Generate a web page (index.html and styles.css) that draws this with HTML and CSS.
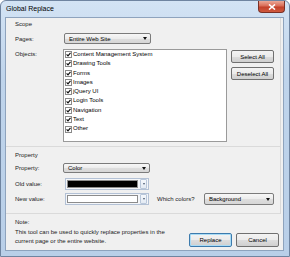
FILE: index.html
```html
<!DOCTYPE html>
<html lang="en">
<head>
  <meta charset="UTF-8">
  <title>Global Replace</title>
  <link rel="stylesheet" href="styles.css">
</head>
<body>
  <div class="window">
    <div class="titlebar">
      <span class="title">Global Replace</span>
      <span class="close">
        <svg width="8" height="6" viewBox="0 0 8 6"><path d="M1 0.5 L7 5.5 M7 0.5 L1 5.5" stroke="#fff" stroke-width="1.6"/></svg>
      </span>
    </div>

    <div class="client">
      <div class="panel scope">
        <div class="heading">Scope</div>
        <div class="row pages">
          <span class="label">Pages:</span>
          <div class="select sel-pages"><span>Entire Web Site</span><i class="arrow"></i></div>
        </div>
        <div class="row objects">
          <span class="label label-top">Objects:</span>
          <ul class="list">
            <li><i class="check"></i>Content Management System</li>
            <li><i class="check"></i>Drawing Tools</li>
            <li><i class="check"></i>Forms</li>
            <li><i class="check"></i>Images</li>
            <li><i class="check"></i>jQuery UI</li>
            <li><i class="check"></i>Login Tools</li>
            <li><i class="check"></i>Navigation</li>
            <li><i class="check"></i>Text</li>
            <li><i class="check"></i>Other</li>
          </ul>
          <div class="side-buttons">
            <button class="btn">Select All</button>
            <button class="btn">Deselect All</button>
          </div>
        </div>
      </div>

      <div class="panel property">
        <div class="heading">Property</div>
        <div class="row prop-row">
          <span class="label">Property:</span>
          <div class="select sel-prop"><span>Color</span><i class="arrow"></i></div>
        </div>
        <div class="row old-row">
          <span class="label">Old value:</span>
          <div class="colorbox">
            <span class="swatch black"></span>
            <span class="mini"><i class="arrow small"></i></span>
          </div>
        </div>
        <div class="row new-row">
          <span class="label">New value:</span>
          <div class="colorbox">
            <span class="swatch white"></span>
            <span class="mini"><i class="arrow small"></i></span>
          </div>
          <span class="which">Which colors?</span>
          <div class="select sel-which"><span>Background</span><i class="arrow"></i></div>
        </div>
      </div>

      <div class="footer">
        <p class="note">Note:<br>This tool can be used to quickly replace properties in the<br>current page or the entire website.</p>
        <div class="actions">
          <button class="btn big default">Replace</button>
          <button class="btn big">Cancel</button>
        </div>
      </div>
    </div>
  </div>
</body>
</html>
```

FILE: styles.css
```css
body {
  margin: 0;
  background: #fff;
  font-family: "Liberation Sans", Arial, sans-serif;
  font-size: 6px;
  color: #1b1b1b;
}

.window {
  box-sizing: border-box;
  width: 290px;
  height: 257px;
  border: 1px solid #6f84a0;
  border-radius: 6px 6px 0 0;
  background: linear-gradient(#d3e3f4, #bfd4eb 30%, #b9cfe8);
  padding: 0 5px 5px 4px;
  display: flex;
  flex-direction: column;
}

.titlebar {
  height: 16px;
  display: flex;
  align-items: flex-start;
  flex-shrink: 0;
}

.title {
  font-size: 7px;
  line-height: 8px;
  margin-top: 4px;
  padding-left: 1px;
  color: #000;
}

.close {
  margin-left: auto;
  margin-right: -1px;
  box-sizing: border-box;
  width: 27px;
  height: 12px;
  border: 1px solid #7a3026;
  border-top: none;
  border-radius: 0 0 4px 4px;
  background: linear-gradient(#eba897, #d96c56 45%, #c3412a 55%, #cf5a3f);
  display: flex;
  align-items: center;
  justify-content: center;
}

.close svg {
  display: block;
}

.client {
  flex: 1;
  background: #f0f0f0;
  border: 1px solid #8ea3bd;
  display: flex;
  flex-direction: column;
}

.panel {
  margin-right: 2px;
  padding-left: 9px;
  border-right: 1px solid #dadada;
  border-bottom: 1px solid #dadada;
}

.scope {
  height: 128px;
  padding-top: 2px;
  box-sizing: border-box;
  height: 129px;
}

.property {
  box-sizing: border-box;
  height: 67px;
  padding-top: 4px;
}

.heading {
  height: 9px;
  line-height: 9px;
}

.row {
  display: flex;
  align-items: center;
}

.label {
  width: 48px;
  flex-shrink: 0;
}

.label-top {
  align-self: flex-start;
  line-height: 9px;
  padding-top: 1px;
}

.pages {
  margin-top: 4px;
  height: 11px;
}

.objects {
  margin-top: 5px;
  align-items: flex-start;
}

.select {
  box-sizing: border-box;
  display: flex;
  align-items: center;
  border: 1px solid #7b7b7b;
  border-radius: 2px;
  background: linear-gradient(#f7f7f7, #ececec 50%, #dedede 51%, #d6d6d6);
  padding: 0 3px 0 4px;
  color: #000;
}

.arrow {
  margin-left: auto;
  width: 0;
  height: 0;
  border-left: 2.5px solid transparent;
  border-right: 2.5px solid transparent;
  border-top: 3px solid #111;
}

.arrow.small {
  margin: 0;
  border-left-width: 1.5px;
  border-right-width: 1.5px;
  border-top-width: 2px;
  border-top-color: #4a5a70;
}

.sel-pages {
  margin-left: 1px;
  width: 87px;
  height: 11px;
}

.list {
  list-style: none;
  margin: 0;
  padding: 0;
  box-sizing: border-box;
  width: 164px;
  height: 93px;
  border: 1px solid #9a9a9a;
  background: #fff;
  color: #000;
}

.list li {
  height: 9.3px;
  line-height: 9.3px;
  display: flex;
  align-items: center;
}

.check {
  box-sizing: border-box;
  width: 7px;
  height: 7px;
  margin: 0 1px 0 1px;
  border: 1px solid #8a8a8a;
  background: #fff url("data:image/svg+xml;utf8,<svg xmlns='http://www.w3.org/2000/svg' width='5' height='5' viewBox='0 0 5 5'><path d='M0.6 2.4 L2 3.8 L4.5 0.8' fill='none' stroke='%23111' stroke-width='1.2'/></svg>") center / 5px 5px no-repeat;
}

.side-buttons {
  margin-left: 4px;
  margin-top: 1px;
  display: flex;
  flex-direction: column;
  gap: 4px;
}

.btn {
  box-sizing: border-box;
  width: 43px;
  height: 13px;
  padding: 0;
  border: 1px solid #707070;
  border-radius: 2px;
  background: linear-gradient(#f3f3f3, #ebebeb 50%, #dddddd 51%, #cfcfcf);
  font-family: inherit;
  font-size: 6px;
  color: #000;
}

.prop-row {
  margin-top: 3px;
  height: 10px;
}

.sel-prop {
  width: 87px;
  height: 10px;
}

.old-row {
  margin-top: 5px;
  height: 12px;
}

.new-row {
  margin-top: 3px;
  height: 12px;
}

.colorbox {
  box-sizing: border-box;
  margin-left: 2px;
  width: 84px;
  height: 12px;
  border: 1px solid #b3c1d5;
  background: #f4f6f9;
  display: flex;
  align-items: center;
  padding: 0 1px 0 1px;
  gap: 2px;
}

.swatch {
  box-sizing: border-box;
  width: 72px;
  height: 8px;
  border: 1px solid #8c8c8c;
}

.swatch.black {
  background: #000;
}

.swatch.white {
  background: #fff;
}

.mini {
  box-sizing: border-box;
  width: 7px;
  height: 10px;
  border: 1px solid #b9c7da;
  border-radius: 1px;
  background: linear-gradient(#f5f8fc, #e3eaf3);
  display: flex;
  align-items: center;
  justify-content: center;
}

.which {
  margin-left: 8px;
  width: 47px;
}

.sel-which {
  width: 70px;
  height: 12px;
}

.footer {
  flex: 1;
  display: flex;
  padding: 4px 4px 3px 9px;
}

.note {
  margin: 0;
  flex: 1;
  line-height: 9.5px;
}

.actions {
  align-self: flex-end;
  display: flex;
  gap: 4px;
}

.btn.big {
  height: 14px;
}

.btn.default {
  border-color: #3d7bad;
  box-shadow: inset 0 0 0 1px #a9dcf6;
}
```
